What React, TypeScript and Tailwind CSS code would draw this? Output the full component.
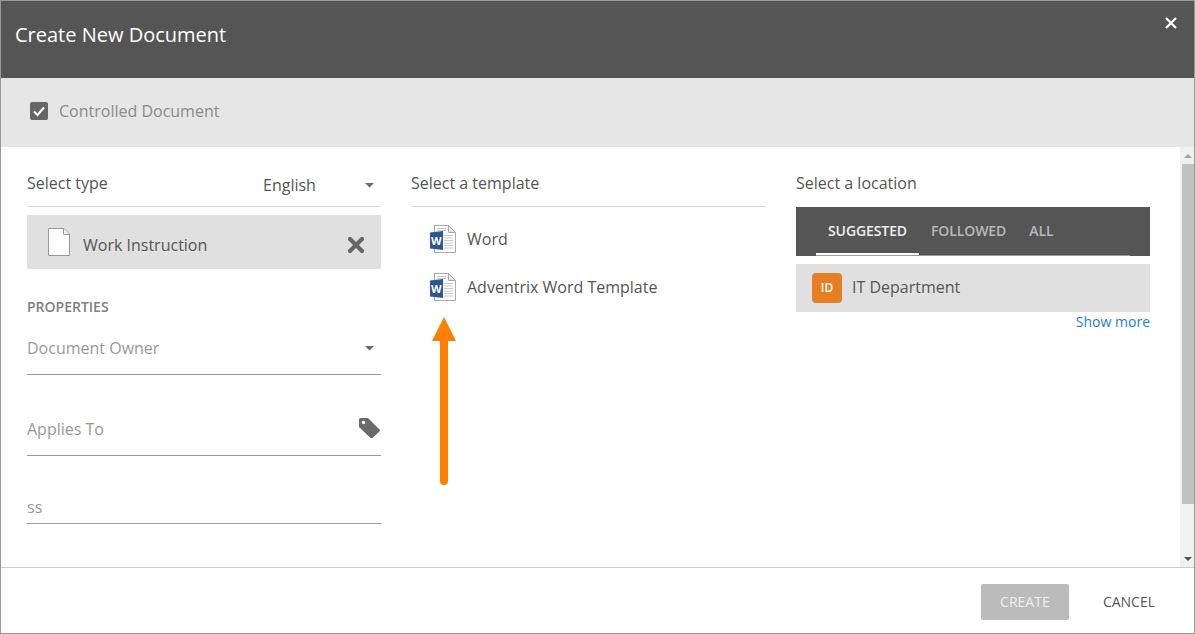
import React from "react";

function Caret({ className = "" }: { className?: string }) {
  return (
    <svg width="9" height="5" viewBox="0 0 9 5" className={className}>
      <path d="M0 0H9L4.5 4.5Z" fill="#6b6b6b" />
    </svg>
  );
}

function WordIcon() {
  return (
    <svg width="26" height="28" viewBox="0 0 26 28" className="block">
      <path d="M4.5 0.5H18.5L25.5 7.5V27.5H4.5Z" fill="#fff" stroke="#a9a9a9" />
      <path d="M18.5 0.5V7.5H25.5Z" fill="#e6e6e6" stroke="#a9a9a9" />
      <path
        d="M14 10.5H23M14 13H23M14 15.5H23M14 18H23M14 20.5H23M14 23H23M7 3.5H16M7 5.5H16"
        stroke="#c4c8cc"
        strokeWidth="1"
      />
      <path d="M0 7.5L13 6V25L0 23.5Z" fill="#2b579a" />
      <text x="6.4" y="19.5" textAnchor="middle" fontSize="11" fontWeight="700" fill="#fff" fontFamily="'Open Sans', sans-serif">
        W
      </text>
    </svg>
  );
}

function Template({ label }: { label: string }) {
  return (
    <div className="flex h-12 items-center pl-[19px]">
      <WordIcon />
      <span className="ml-[11px] text-[16px] text-[#555]">{label}</span>
    </div>
  );
}

export default function App() {
  return (
    <div className="relative flex h-[634px] w-[1195px] flex-col overflow-hidden border border-[#999] bg-white font-['Open_Sans',sans-serif]">
      <header className="flex h-[77px] shrink-0 items-start justify-between bg-[#555] pl-[14px] pr-[17px]">
        <h1 className="mt-[19px] text-[20px] leading-[30px] font-medium text-white">Create New Document</h1>
        <svg width="12" height="12" viewBox="0 0 12 12" className="mt-[16px]">
          <path d="M1 1L11 11M11 1L1 11" stroke="#fff" strokeWidth="2.2" />
        </svg>
      </header>

      <div className="flex h-[69px] shrink-0 items-center gap-[11px] bg-[#e6e6e6] pb-[4px] pl-[29px]">
        <span className="flex h-[18px] w-[18px] items-center justify-center rounded-[2px] bg-[#666]">
          <svg width="14" height="12" viewBox="0 0 14 12">
            <path d="M2 6.5L5.5 10L12 2.5" fill="none" stroke="#fff" strokeWidth="2" />
          </svg>
        </span>
        <span className="text-[16px] text-[#8a8a8a]">Controlled Document</span>
      </div>

      <div className="flex min-h-0 flex-1">
        <main className="flex flex-1 gap-[30px] pl-[26px] pr-[30px]">
          <section className="w-[354px]">
            <div className="flex h-[60px] items-end justify-between border-b border-[#d5d5d5] pb-[11px]">
              <span className="text-[16px] leading-[24px] text-[#555]">Select type</span>
              <div className="flex w-[118px] items-center justify-between pr-[7px]">
                <span className="translate-y-[2px] text-[16px] leading-[24px] text-[#555]">English</span>
                <Caret className="translate-y-[2px]" />
              </div>
            </div>
            <div className="mt-2 flex h-[54px] items-center justify-between bg-[#e0e0e0] pl-[21px] pr-[17px]">
              <div className="flex items-center gap-[13px]">
                <svg width="22" height="28" viewBox="0 0 22 28">
                  <path d="M0.5 0.5H16L21.5 6V27.5H0.5Z" fill="#fff" stroke="#999" />
                  <path d="M15.5 0.5V6.5H21.5" fill="#eee" stroke="#999" />
                </svg>
                <span className="mt-[6px] text-[16px] text-[#555]">Work Instruction</span>
              </div>
              <svg width="16" height="16" viewBox="0 0 16 16" className="mt-[6px]">
                <path d="M2 2L14 14M14 2L2 14" stroke="#666" strokeWidth="4.2" strokeLinecap="round" />
              </svg>
            </div>

            <h2 className="mt-[28px] text-[14px] leading-[20px] font-semibold text-[#808080]">PROPERTIES</h2>
            <div className="mt-[6px] flex h-[52px] items-center justify-between border-b border-[#999] pb-[3px] pr-[7px]">
              <span className="mt-[1px] text-[16px] text-[#999]">Document Owner</span>
              <Caret className="mt-[2px]" />
            </div>
            <div className="mt-[29px] flex h-[52px] items-center justify-between border-b border-[#999]">
              <span className="mt-[-1px] text-[16px] text-[#999]">Applies To</span>
              <svg width="21" height="20" viewBox="0 0 21 20" className="mr-[1px] mt-[-4px]">
                <path d="M0 1.5A1.5 1.5 0 0 1 1.5 0H9L20.5 11.5A1.5 1.5 0 0 1 20.5 13.5L13.5 20A1.5 1.5 0 0 1 11.5 20L0 9Z" fill="#6b6b6b" />
                <circle cx="4.5" cy="4.5" r="1.7" fill="#fff" />
              </svg>
            </div>
            <div className="mt-[29px] flex h-[39px] items-center border-b border-[#999]">
              <span className="mt-[6px] text-[16px] text-[#999]">ss</span>
            </div>
          </section>

          <section className="w-[355px]">
            <div className="flex h-[60px] items-end border-b border-[#d5d5d5] pb-[11px]">
              <span className="text-[16px] leading-[24px] text-[#555]">Select a template</span>
            </div>
            <div className="mt-2">
              <Template label="Word" />
              <Template label="Adventrix Word Template" />
            </div>
          </section>

          <section className="w-[354px]">
            <div className="flex h-[60px] items-end pb-[12px]">
              <span className="text-[16px] leading-[24px] text-[#555]">Select a location</span>
            </div>
            <div className="flex h-[49px] items-end bg-[#555] px-[20px]">
              <div className="flex h-full w-full items-start border-b border-[#999] text-[14px] leading-[20px] tracking-[-0.1px]">
                <div className="h-[48px] w-[103px] border-b-2 border-white pl-[12px] pt-[14px] font-semibold text-[#eee]">
                  SUGGESTED
                </div>
                <div className="pl-[12px] pt-[14px] font-semibold text-[#b9b9b9]">FOLLOWED</div>
                <div className="pl-[23px] pt-[14px] font-semibold text-[#b9b9b9]">ALL</div>
              </div>
            </div>
            <div className="mt-2 flex h-[48px] items-center bg-[#e0e0e0] pl-4">
              <span className="flex h-[30px] w-[30px] items-center justify-center rounded-[4px] bg-[#e67e22] text-[12px] font-semibold text-white">
                ID
              </span>
              <span className="ml-[10px] mt-[-2px] text-[16px] text-[#555]">IT Department</span>
            </div>
            <div className="text-right text-[14px] leading-[19px] text-[#1b7fd1]">Show more</div>
          </section>
        </main>

        <div className="flex w-[14px] shrink-0 flex-col bg-[#f0f0f0] pl-[2px]">
          <div className="flex h-[17px] items-center justify-center">
            <svg width="8" height="4" viewBox="0 0 8 4"><path d="M0 4H8L4 0Z" fill="#a3a3a3" /></svg>
          </div>
          <div className="h-[340px] w-full bg-[#c1c1c1]" />
          <div className="mt-auto flex h-[17px] items-center justify-center">
            <svg width="8" height="4" viewBox="0 0 8 4"><path d="M0 0H8L4 4Z" fill="#505050" /></svg>
          </div>
        </div>
      </div>

      <footer className="flex h-[66px] shrink-0 items-center justify-end border-t border-[#ccc] pr-[39px] pt-[2px]">
        <div className="flex h-9 w-[88px] items-center justify-center rounded-[2px] bg-[#bbb] text-[14px] text-[#eee]">CREATE</div>
        <div className="ml-[34px] text-[14px] text-[#555]">CANCEL</div>
      </footer>

      <svg width="24" height="170" viewBox="0 0 24 170" className="absolute left-[431px] top-[316px]">
        <path d="M12 0L24 24H0Z" fill="#ff8000" />
        <path d="M12 24V164" stroke="#ff8000" strokeWidth="8" strokeLinecap="round" />
      </svg>
    </div>
  );
}
